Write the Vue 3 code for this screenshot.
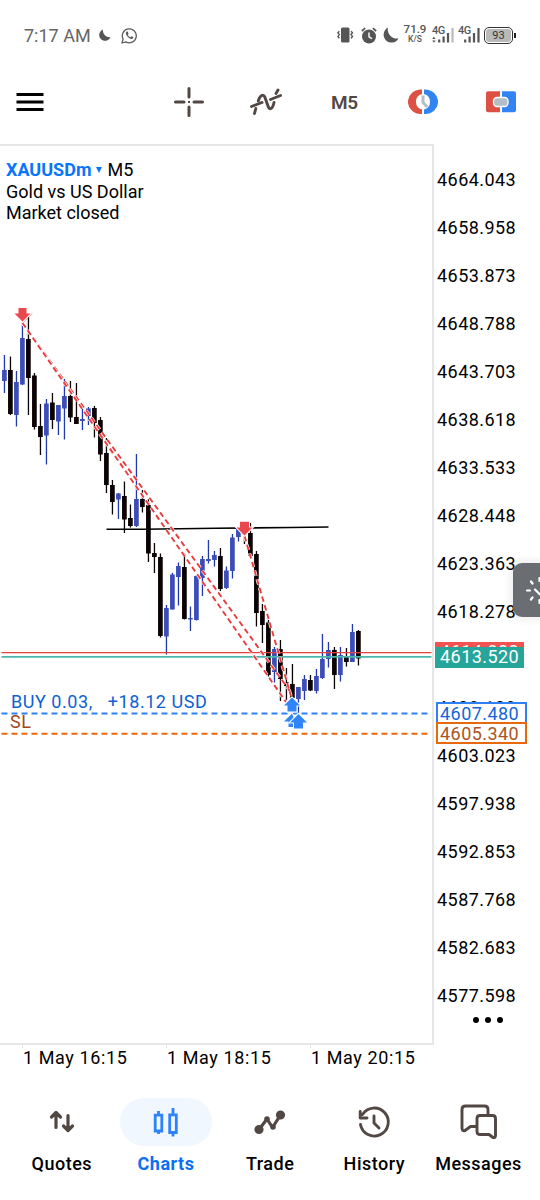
<script setup>
import { ref } from 'vue';

// first price on the axis and the step between two labels
const topPrice = 4664.043;
const priceStep = 5.085;
const prices = Array.from({ length: 18 }, (_, i) => (topPrice - i * priceStep).toFixed(3));

const times = ['1 May 16:15', '1 May 18:15', '1 May 20:15'];

// [up, high, low, body top, body bottom]
const candles = [
    [1, 355, 393, 370, 381], [0, 356.5, 415, 370, 414], [1, 371, 426.5, 382, 415], [1, 323, 385, 338, 384.5],
    [0, 317, 415, 339, 378], [0, 373, 429.5, 375.5, 427], [0, 404, 455, 426, 437], [1, 399, 464.5, 403.5, 435.5],
    [0, 393, 429, 402.5, 420], [1, 405, 435, 405, 421.5], [1, 379, 439.5, 396, 408.5], [0, 381, 422, 396, 417.5],
    [0, 383, 424, 417, 424], [1, 409, 430, 419, 421], [1, 407, 425, 408.5, 416], [0, 406, 437.5, 408, 423],
    [0, 417, 461, 420, 454.5], [0, 438, 493, 453, 485], [0, 480, 514.5, 485, 502], [1, 493, 519, 493.5, 499.5],
    [0, 481.5, 533, 496, 519.5], [0, 504.5, 527.5, 518, 526], [1, 454, 527, 499, 526], [0, 490, 512.5, 499, 507],
    [0, 499, 562, 505, 553.5], [0, 543, 573, 553, 557], [0, 553.5, 637.5, 557, 636], [1, 605, 654.5, 608, 636.5],
    [1, 573, 609.5, 574.5, 609.5], [1, 562.5, 605.5, 566, 577], [0, 553.5, 619.5, 567, 619], [1, 606.5, 631, 618, 619.5],
    [1, 575, 620.5, 576, 620], [1, 556, 596, 559, 578], [1, 540, 563.5, 559, 561], [1, 551, 566.5, 555, 560],
    [0, 548, 591, 556, 589], [1, 566.5, 589, 570.5, 588], [1, 534, 578.5, 537.5, 571], [1, 528, 541.5, 529, 537],
    [0, 527, 544, 527, 535], [0, 523, 557, 533, 556], [0, 551, 626.5, 554, 613], [0, 604, 643, 611, 625],
    [0, 620, 676.5, 622.5, 675], [1, 647, 682.5, 649, 672], [0, 640, 701, 649, 679], [0, 668, 701, 682, 686],
    [0, 664, 700, 684, 698], [1, 687, 713.5, 687, 699], [1, 675, 700, 679, 691], [0, 675, 691, 680, 690.5],
    [1, 669, 693.5, 676, 691], [1, 634, 679, 659, 678], [1, 642, 667.5, 650, 659], [0, 647, 689, 650, 675],
    [1, 647, 681.5, 655, 675], [0, 648, 666.5, 656, 662], [1, 624, 662, 632, 662], [0, 630, 665.5, 631, 658.5],
].map(([up, high, low, top, bottom], i) => ({ up, high, low, top, bottom, x: 4.4 + i * 6 }));

// closed deals: entry to exit
const deals = [
    'M22.5 323L292 694',
    'M22.5 323L286 702',
    'M244.5 536L291 696',
];

const tabs = [
    { name: 'Quotes', icon: 'quotes' },
    { name: 'Charts', icon: 'charts' },
    { name: 'Trade', icon: 'trade' },
    { name: 'History', icon: 'history' },
    { name: 'Messages', icon: 'messages' },
];
const active = ref('Charts');
</script>

<template>
    <div class="screen">
        <header class="status">
            <span class="clock">7:17 AM</span>
            <svg class="moon-small" width="12" height="12" viewBox="0 0 12 12">
                <path d="M3.9 .6A5.8 5.8 0 1 0 11.4 8.2A6.8 6.8 0 0 1 3.9 .6Z" fill="#555" />
            </svg>
            <svg class="whatsapp" width="17" height="17" viewBox="0 0 17 17">
                <path d="M1 16l1.1-3.9A7 7 0 1 1 4.8 14.9Z" fill="none" stroke="#5c5c5c" stroke-width="1.3" stroke-linejoin="round" />
                <path d="M5.6 4.5C4 6 5.1 8.2 6.9 10c1.9 1.8 4 2.7 5.4 1.1l.1-.9-2-1-1.1 1C8.3 9.8 7.3 8.8 6.8 7.7l.8-1-.9-2.1Z" fill="#5c5c5c" />
            </svg>
            <div class="status-right">
                <svg width="18" height="16" viewBox="0 0 18 16">
                    <rect x="5" y="0.5" width="8.5" height="15" rx="1.5" fill="#555" />
                    <path d="M3.3 4.2L1.9 5.8L3.3 7.6L1.9 9.4L3.3 11.2M15 4.2L16.5 5.8L15 7.6L16.5 9.4L15 11.2" fill="none" stroke="#555" stroke-width="1.4" />
                </svg>
                <svg class="alarm" width="16" height="17" viewBox="0 0 16 17">
                    <circle cx="8" cy="9.5" r="7" fill="#555" />
                    <path d="M.8 4L4.2 1.1M15.2 4L11.8 1.1" stroke="#555" stroke-width="1.7" />
                    <path d="M8 5.6V9.8L10.9 11.6" fill="none" stroke="#fff" stroke-width="1.4" />
                </svg>
                <svg class="moon" width="16" height="16" viewBox="0 0 16 16">
                    <path d="M5 .6A7.9 7.9 0 1 0 15.5 11.4A9 9 0 0 1 5 .6Z" fill="#555" />
                </svg>
                <div class="speed"><b>71.9</b><small>K/S</small></div>
                <div class="net">
                    <span>4G</span>
                    <svg width="22" height="16" viewBox="0 0 22 16">
                        <path d="M0.2 12L1.9 9.8L3.6 12ZM0.2 13.5H3.6L1.9 15.7Z" fill="#555" />
                        <path d="M7.2 12.5V15.5M11.6 9.5V15.5M16 6V15.5" stroke="#555" stroke-width="2.2" />
                        <path d="M20.5 1V15.5" stroke="#bbb" stroke-width="2.2" />
                    </svg>
                </div>
                <div class="net second">
                    <span>4G</span>
                    <svg width="22" height="16" viewBox="0 0 22 16">
                        <path d="M7.2 12.5V15.5M11.6 9.5V15.5M16 6V15.5M20.5 1V15.5" stroke="#555" stroke-width="2.2" />
                    </svg>
                </div>
                <div class="battery"><span>93</span></div>
                <i class="battery-tip"></i>
            </div>
        </header>

        <nav class="toolbar">
            <svg width="28" height="20" viewBox="0 0 28 20">
                <path d="M0.5 2.5H27.5M0.5 10H27.5M0.5 17.5H27.5" stroke="#000" stroke-width="3" />
            </svg>
            <svg class="cross" width="30" height="30" viewBox="0 0 30 30">
                <path d="M15 1.5V10M15 20V28.5M1.5 15H10M20 15H28.5" stroke="#524743" stroke-width="3" stroke-linecap="round" />
                <rect x="14" y="14" width="2" height="2" fill="#524743" />
            </svg>
            <svg class="indicator" width="32" height="28" viewBox="0 0 32 28">
                <g fill="none" stroke="#524743" stroke-width="2.9" stroke-linecap="round">
                    <path d="M1.5 18.5L12 14.5M20.5 11.5L30.5 7.5" />
                    <path d="M5.8 20.5L4.5 25.5M8.3 13C10 7 13.4 5.5 15 9.5L18 18C19.5 22.5 22.5 21.5 24 14.5M26 5.5L28 2" />
                </g>
            </svg>
            <span class="period">M5</span>
            <svg class="sync" width="30" height="26" viewBox="0 0 30 26">
                <path d="M14 0.500H13A13 12.200 0 0 0 13 25H14V20.500A8 8 0 0 1 14 5Z" fill="#dd5145" />
                <path d="M16 0.500H17A13 12.200 0 0 1 17 25H16V20.500A8 8 0 0 0 16 5Z" fill="#3284f3" />
                <path d="M15 6.500V13.500L19.300 18" fill="none" stroke="#b3bec7" stroke-width="3" />
            </svg>
            <svg class="order" width="30" height="22" viewBox="0 0 30 22">
                <path d="M2 .3H14V21.300H2Q0 21.300 0 19.300V2.300Q0 .3 2 .3Z" fill="#dd5145" />
                <path d="M16 .3H28Q30 .3 30 2.300V19.300Q30 21.300 28 21.300H16Z" fill="#3284f3" />
                <rect x="7.500" y="6.500" width="14.500" height="9" rx="3.500" fill="#b3bec7" stroke="#fff" stroke-width="1.300" />
            </svg>
        </nav>

        <main class="chart">
            <section class="plot">
                <svg class="canvas" width="432" height="897" viewBox="0 146 432 897">
                    <g v-for="c in candles" :key="c.x" :class="c.up ? 'up' : 'down'">
                        <rect :x="c.x - 0.6" :y="c.high" width="1.3" :height="c.low - c.high" />
                        <rect class="body" :x="c.x - 2.35" :y="c.top" width="4.7" :height="c.bottom - c.top" />
                    </g>
                    <path d="M106.5 529.3H143L216 528.2L291 527.5L328.5 527" fill="none" stroke="#000" stroke-width="1.6" />
                    <path d="M1.5 652.7H431.5" stroke="#e9403f" stroke-width="1.3" />
                    <path d="M1.5 656.9H431.5" stroke="#4db6ac" stroke-width="1.9" />
                    <path d="M1.5 713.4H428" stroke="#2f80f5" stroke-width="2" stroke-dasharray="6 4" />
                    <path d="M1.5 733.8H428" stroke="#e8690b" stroke-width="2" stroke-dasharray="6 4" />
                    <g fill="none">
                        <template v-for="d in deals" :key="d">
                            <path :d="d" stroke="#fff" stroke-width="3.2" stroke-dasharray="5.5 3.5" />
                            <path :d="d" stroke="#e83c3e" stroke-width="1.9" stroke-dasharray="5.5 3.5" />
                        </template>
                    </g>
                    <g class="arrows">
                        <path d="M23 322L32 313" stroke="#e9494c" stroke-width="1.3" />
                        <path d="M18.5 308H26.5V313.5H30.5L22.5 321.5L14.5 313.5H18.500Z" fill="#e9494c" />
                        <path d="M240 521.8H249V527.5H252.500L244.500 535.500L236.500 527.500H240Z" fill="#e9494c" />
                        <path d="M292 713.500L284 721.500H288.500V727H295V721Z" fill="#3085fb" />
                        <path d="M292 697.500L300 705.500H296.500V711.500H287.500V705.500H284Z" fill="#3085fb" />
                        <path d="M298.500 714L307 722.500H303V728.500H294V722.500H290Z" fill="#3085fb" />
                    </g>
                </svg>
                <div class="symbol">
                    <div><b>XAUUSDm</b><i class="caret"></i><span>M5</span></div>
                    <div>Gold vs US Dollar</div>
                    <div>Market closed</div>
                </div>
                <span class="position">BUY 0.03, &nbsp; +18.12 USD</span>
                <span class="stop">SL</span>
            </section>
            <aside class="axis">
                <div v-for="p in prices" :key="p" class="price">{{ p }}</div>
                <span class="tag ask">4614.000</span>
                <span class="tag bid">4613.520</span>
                <span class="tag buy">4607.480</span>
                <span class="tag sl">4605.340</span>
                <div class="dots"><i></i><i></i><i></i></div>
                <div class="floating">
                    <svg width="27" height="54" viewBox="0 0 27 54">
                        <path d="M14 27.5H17M18 18.5L19.5 20.5M18 36.5L19.5 34.500M26.500 15V18M26.500 37V40M22 26.500L27 31.500" stroke="#fff" stroke-width="2.200" stroke-linecap="round" fill="none" />
                    </svg>
                </div>
            </aside>
        </main>

        <div class="times">
            <span v-for="t in times" :key="t">{{ t }}</span>
        </div>

        <footer class="tabs">
            <button v-for="t in tabs" :key="t.name" :class="{ active: active === t.name }" @click="active = t.name">
                <span class="pill">
                    <svg v-if="t.icon === 'quotes'" width="40" height="40" viewBox="0 0 40 40" class="line">
                        <path d="M14 25.5V11M9.5 15L14 10.5L18.500 15M26 13.500V28M21.500 24L26 28.500L30.500 24" />
                    </svg>
                    <svg v-else-if="t.icon === 'charts'" width="40" height="40" viewBox="0 0 40 40" class="bars">
                        <path d="M9.2 13.2H15.8V29H9.2ZM12.5 9V13M12.5 29V32M23.7 12.8H30.3V30.5H23.7ZM27 6V12M27 30.5V34.5" />
                    </svg>
                    <svg v-else-if="t.icon === 'trade'" width="40" height="40" viewBox="0 0 40 40" class="line">
                        <path d="M9 27.5L17 17L22.5 25.5L30.5 13" />
                        <circle cx="9" cy="27.5" r="3" /><circle cx="30.5" cy="13" r="3" />
                        <circle cx="17" cy="17" r="1.2" /><circle cx="23" cy="25" r="1.2" />
                    </svg>
                    <svg v-else-if="t.icon === 'history'" width="40" height="40" viewBox="0 0 40 40" class="line thin">
                        <path d="M6.5 22.5A14 14 0 1 0 8.5 12.5M6.2 9.5V16H13M20 14V21L25 26" />
                    </svg>
                    <svg v-else width="40" height="40" viewBox="0 0 40 40" class="line thin">
                        <path d="M17 24.5H11.5L6 28.5Q3 29.5 3 26V7.5Q3 4 6.5 4H25.5Q29 4 29 7.5V12" />
                        <path d="M21 13.5H33.5Q36.5 13.5 36.5 16.5V33.5Q36.5 36 34 35.5L30 32.5H21Q18 32.5 18 29.5V16.5Q18 13.5 21 13.5Z" />
                    </svg>
                </span>
                <span class="label">{{ t.name }}</span>
            </button>
        </footer>
    </div>
</template>

<style>
body {
    background: #fff;
}
</style>

<style scoped>
.screen {
    width: 540px;
    height: 1200px;
    overflow: hidden;
    display: flex;
    flex-direction: column;
    background: #fff;
    color: #000;
    font-family: Roboto, "Liberation Sans", sans-serif;
    font-size: 18px;
}

.screen svg {
    display: block;
    flex: none;
}

.status {
    height: 72px;
    display: flex;
    align-items: center;
    padding-left: 24px;
    color: #666;
}

.clock {
    width: 75px;
    margin-top: -1px;
    font-size: 18px;
    white-space: nowrap;
}

.whatsapp {
    margin-left: 10px;
}

.moon-small,
.whatsapp,
.status-right {
    position: relative;
    top: -1px;
}

.status-right {
    margin-left: auto;
    margin-right: 24px;
    display: flex;
    align-items: center;
    color: #555;
}

.alarm {
    margin-left: 7px;
}

.moon {
    margin-left: 6px;
}

.speed {
    width: 24px;
    margin-left: 4px;
    text-align: center;
    line-height: 10px;
    margin-top: -3px;
}

.speed b {
    display: block;
    font-size: 11.5px;
    font-weight: 500;
}

.speed small {
    display: block;
    font-size: 8.5px;
    line-height: 10px;
    font-weight: 500;
}

.net {
    position: relative;
    margin-left: 5px;
}

.net.second {
    margin-left: 4px;
}

.net span {
    position: absolute;
    left: 0;
    top: -2px;
    font-size: 11px;
    line-height: 12px;
    letter-spacing: -0.5px;
    font-weight: 500;
}

.battery {
    width: 25px;
    height: 13px;
    padding: 1px;
    margin-left: 4px;
    border: 1.5px solid #333;
    border-radius: 5px;
}

.battery span {
    display: block;
    height: 13px;
    border-radius: 3px;
    background: #b9b9b9;
    font-size: 11px;
    line-height: 13px;
    text-align: center;
    color: #333;
}

.battery-tip {
    width: 2px;
    height: 5px;
    background: #222;
    margin-left: 1px;
}

.toolbar {
    height: 60px;
    margin-bottom: 12px;
    padding: 0 24px 0 16px;
    display: flex;
    align-items: center;
}

.cross {
    margin-left: 130px;
}

.indicator {
    margin-left: 46px;
}

.period {
    width: 28px;
    margin-left: 49px;
    font-size: 19px;
    font-weight: 600;
    letter-spacing: -0.3px;
    color: #524743;
}

.sync {
    margin-left: 49px;
}

.order {
    margin-left: 48px;
}

.chart {
    height: 901px;
    display: flex;
}

.plot {
    position: relative;
    width: 432px;
    height: 897px;
    border: solid #e6e6e6;
    border-width: 2px 2px 2px 0;
}

.up {
    fill: #2238ad;
}

.up .body {
    fill: #3d4db8;
}

.down {
    fill: #0b0303;
}

.arrows {
    stroke: #fff;
    stroke-width: 2;
    paint-order: stroke;
}

.symbol {
    position: absolute;
    left: 6px;
    top: 13px;
    font-size: 18px;
    line-height: 21.5px;
}

.symbol > div {
    display: flex;
    align-items: center;
}

.symbol b {
    color: #0a75fb;
    font-weight: 700;
}

.caret {
    border: 3px solid transparent;
    border-top: 6px solid #0a75fb;
    border-bottom: 0;
    margin: 0 5px;
}

.position,
.stop {
    position: absolute;
    left: 11px;
    top: 545px;
    line-height: 22px;
    white-space: nowrap;
    letter-spacing: 0.55px;
    color: #0d61d3;
}

.stop {
    left: 10px;
    top: 565px;
    color: #a2471a;
}

.axis {
    position: relative;
    width: 106px;
    padding-top: 12px;
}

.price {
    height: 48px;
    line-height: 48px;
    padding-left: 3px;
    letter-spacing: 0.45px;
}

.tag {
    position: absolute;
    left: 1px;
    width: 84px;
    height: 21px;
    padding-left: 5px;
    line-height: 20px;
    letter-spacing: 0.45px;
}

.ask {
    top: 498px;
    background: #f05350;
    color: #fff;
}

.bid {
    top: 503px;
    background: #26a69a;
    color: #fff;
}

.buy,
.sl {
    left: 2px;
    width: 85px;
    height: 18px;
    padding-left: 2px;
    line-height: 20px;
    border: 2px solid #2f80f5;
    background: #fff;
    color: #1565d8;
}

.buy {
    top: 558px;
}

.sl {
    top: 578px;
    border-color: #e8690b;
    color: #ab5423;
}

.dots {
    display: flex;
    gap: 6px;
    margin-top: -3px;
    padding-left: 39px;
}

.dots i {
    width: 6px;
    height: 6px;
    border-radius: 50%;
    background: #000;
}

.floating {
    position: absolute;
    left: 79px;
    top: 419px;
    width: 27px;
    height: 54px;
    border-radius: 9px 0 0 9px;
    background: #6a6d72;
    box-shadow: 0 0 7px 4px rgba(0, 0, 0, 0.06);
}

.times {
    height: 43px;
    padding-left: 22px;
    display: flex;
}

.times span {
    width: 144px;
    height: 26px;
    line-height: 25px;
    box-sizing: border-box;
    padding-left: 1px;
    letter-spacing: 0.6px;
    white-space: nowrap;
    background: linear-gradient(#e6e6e6, #e6e6e6) 0 0 / 1px 3px no-repeat;
}

.tabs {
    height: 112px;
    padding-left: 9.7px;
    display: flex;
}

.tabs button {
    width: 104.2px;
    flex: none;
    padding: 10px 0 0;
    border: 0;
    background: none;
    font: inherit;
    color: #000;
    display: flex;
    flex-direction: column;
    align-items: center;
}

.pill {
    width: 92px;
    height: 48px;
    border-radius: 24px;
    display: flex;
    align-items: center;
    justify-content: center;
}

.active .pill {
    background: #f0f7ff;
}

.label {
    margin-top: 7px;
    line-height: 22px;
    font-size: 18px;
    font-weight: 500;
    letter-spacing: 0.5px;
}

.active .label {
    color: #0a6ff5;
    font-weight: 700;
}

.line {
    fill: none;
    stroke: #524743;
    stroke-width: 3.2;
    stroke-linecap: round;
    stroke-linejoin: round;
}

.line.thin {
    stroke-width: 2.9;
}

.line circle {
    fill: #524743;
}

.bars {
    fill: none;
    stroke: #2e83fa;
    stroke-width: 2.8;
}
</style>
